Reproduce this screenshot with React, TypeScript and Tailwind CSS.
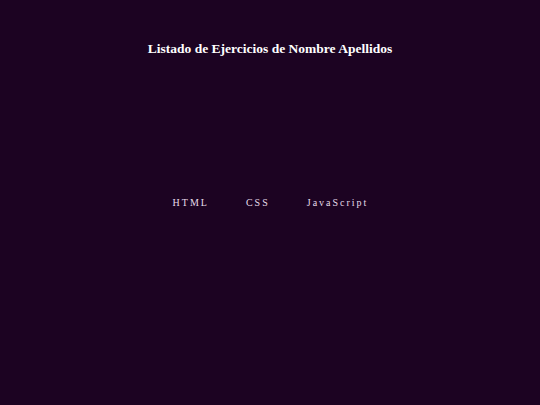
const links = ["HTML", "CSS", "JavaScript"];

export default function App() {
  return (
    <div className="min-h-screen bg-[#1c0322] font-['Liberation_Serif',serif] text-white">
      <header className="pt-[40px] text-center">
        <h1 className="text-[13.5px] font-bold leading-[17px]">
          Listado de Ejercicios de Nombre Apellidos
        </h1>
      </header>
      <nav className="mt-[132px]">
        <ul className="flex justify-center gap-[37px] pl-[1px]">
          {links.map((l) => (
            <li key={l}>
              <a href="#" className="text-[10px] leading-[14px] tracking-[2px] text-[#e6dcea]">
                {l}
              </a>
            </li>
          ))}
        </ul>
      </nav>
    </div>
  );
}
